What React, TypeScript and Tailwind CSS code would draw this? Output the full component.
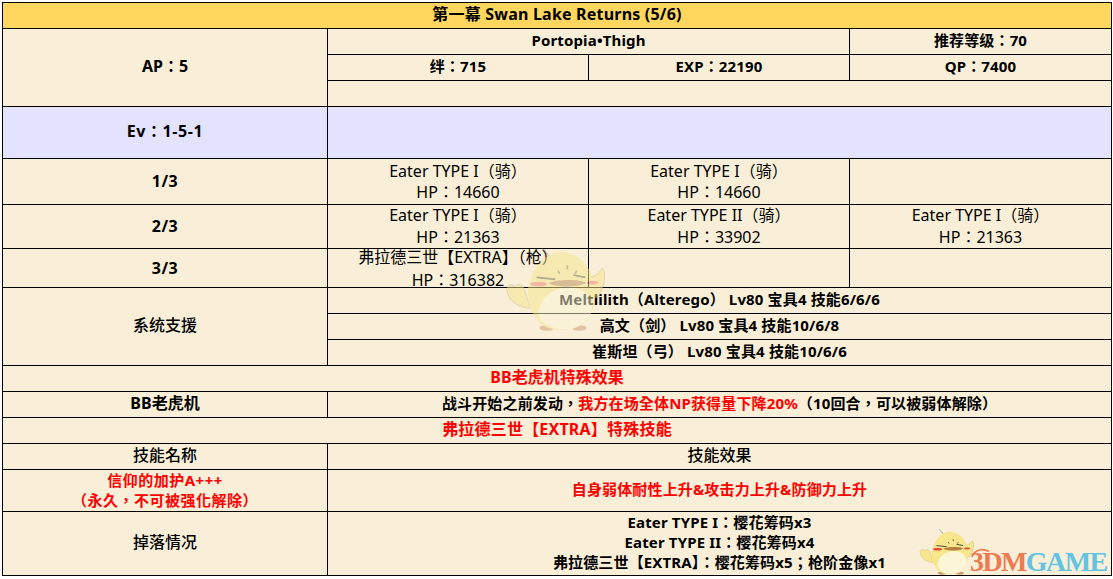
import React from "react";

const fontStack = { fontFamily: '"Noto Sans", "Noto Sans CJK TC", sans-serif' };

function Chick({ className, line, beak, cheek }: { className: string; line: string; beak: string; cheek: string }) {
  return (
    <svg viewBox="0 0 390 300" className={className}>
      <path d="M155 25 C165 32 172 40 180 52" fill="none" stroke={line} strokeWidth="4" opacity="0.6" />
      <path d="M50 145 C58 132 68 130 74 142 C82 130 98 132 102 146 L122 205 C100 205 70 190 62 178 C56 168 50 156 50 145Z" fill="#f7e68c" stroke="#cdbb8a" strokeWidth="3" />
      <path d="M305 112 C320 105 332 95 338 84 C348 105 345 140 322 172 L300 170Z" fill="#f7e68c" stroke="#cdbb8a" strokeWidth="3" />
      <ellipse cx="170" cy="264" rx="22" ry="8" fill="#c99a6b" />
      <ellipse cx="268" cy="264" rx="22" ry="8" fill="#c99a6b" />
      <path d="M210 36 C165 38 128 85 115 140 C106 190 130 240 170 262 C205 274 255 272 285 245 C315 215 322 160 305 105 C290 65 255 36 210 36Z" fill="#f7e68c" />
      <path d="M145 220 C150 170 195 140 240 142 C285 145 312 175 305 210 C295 245 265 268 225 268 C185 268 150 250 145 220Z" fill="#fcf6d6" />
      <path d="M176 130 C195 118 265 116 288 128 C270 142 200 144 176 130Z" fill={beak} />
      <path d="M140 112 L196 118 M250 105 L286 112" stroke={line} strokeWidth="5" />
      <path d="M232 76 V88 M204 92 L209 101 M260 92 L255 101" stroke={line} strokeWidth="5" opacity="0.7" />
      <ellipse cx="146" cy="132" rx="25" ry="7" fill={cheek} />
      <ellipse cx="308" cy="128" rx="17" ry="6" fill={cheek} />
    </svg>
  );
}

const cell = "border border-black text-center align-middle p-0 leading-[22px] pb-[3px]";
const cellLow = "border border-black text-center align-middle p-0 leading-[22px] pb-[1px]";
const two = "border border-black text-center align-middle p-0 text-[16px]";
const b15 = "font-bold text-[15px] tracking-[0.15px]";
const red = "text-[#ff0000]";

function Row({ h, children }: { h: number; children: React.ReactNode }) {
  return <tr style={{ height: h }}>{children}</tr>;
}

function Lines({ cls, a, b }: { cls: string; a: string; b: string }) {
  return (
    <div className={`flex flex-col items-center justify-center whitespace-nowrap ${cls}`}>
      <div>{a}</div>
      <div>{b}</div>
    </div>
  );
}

export default function App() {
  const r1 = "h-[44px] leading-[21px]";
  const r2 = "h-[43px] leading-[22px] pb-[2px]";
  const r3 = "h-[38px] leading-[23px] pt-[2px]";
  return (
    <div className="relative h-[579px] w-[1113px] overflow-hidden bg-white text-[16px] text-black" style={fontStack}>
      <div className="p-[2px]">
        <table className="w-[1109px] table-fixed border-collapse bg-[#f9efd8]">
          <colgroup>
            <col className="w-[325px]" />
            <col className="w-[261px]" />
            <col className="w-[261px]" />
            <col className="w-[262px]" />
          </colgroup>
          <tbody>
            <Row h={26}>
              <td colSpan={4} className={`${cell} bg-[#ffd75f] font-bold tracking-[0.2px]`}>第一幕 Swan Lake Returns (5/6)</td>
            </Row>
            <Row h={26}>
              <td rowSpan={3} className={`${cell} font-bold`}>AP：5</td>
              <td colSpan={2} className={`${cell} ${b15}`}>Portopia•Thigh</td>
              <td className={`${cell} ${b15}`}>推荐等级：70</td>
            </Row>
            <Row h={26}>
              <td className={`${cell} ${b15}`}>绊：715</td>
              <td className={`${cell} ${b15}`}>EXP：22190</td>
              <td className={`${cell} ${b15}`}>QP：7400</td>
            </Row>
            <Row h={26}>
              <td colSpan={3} className={cell}></td>
            </Row>
            <Row h={52}>
              <td className={`${cell} bg-[#e3e3ff] font-bold tracking-[0.6px]`}>Ev：1-5-1</td>
              <td colSpan={3} className={`${cell} bg-[#e3e3ff]`}></td>
            </Row>
            <Row h={46}>
              <td className={`${cellLow} font-bold tracking-[0.6px]`}>1/3</td>
              <td className={two}><Lines cls={r1} a="Eater TYPE I（骑）" b="HP：14660" /></td>
              <td className={two}><Lines cls={r1} a="Eater TYPE I（骑）" b="HP：14660" /></td>
              <td className={two}></td>
            </Row>
            <Row h={44}>
              <td className={`${cellLow} font-bold tracking-[0.6px]`}>2/3</td>
              <td className={two}><Lines cls={r2} a="Eater TYPE I（骑）" b="HP：21363" /></td>
              <td className={two}><Lines cls={r2} a="Eater TYPE II（骑）" b="HP：33902" /></td>
              <td className={two}><Lines cls={r2} a="Eater TYPE I（骑）" b="HP：21363" /></td>
            </Row>
            <Row h={39}>
              <td className={`${cellLow} font-bold tracking-[0.6px]`}>3/3</td>
              <td className={two}><Lines cls={r3} a="弗拉德三世【EXTRA】（枪）" b="HP：316382" /></td>
              <td className={two}></td>
              <td className={two}></td>
            </Row>
            <Row h={26}>
              <td rowSpan={3} className={`${cell} font-medium`}>系统支援</td>
              <td colSpan={3} className={`${cell} ${b15}`}>Meltlilith（Alterego） Lv80 宝具4 技能6/6/6</td>
            </Row>
            <Row h={26}>
              <td colSpan={3} className={`${cell} ${b15}`}>高文（剑） Lv80 宝具4 技能10/6/8</td>
            </Row>
            <Row h={26}>
              <td colSpan={3} className={`${cell} ${b15}`}>崔斯坦（弓） Lv80 宝具4 技能10/6/6</td>
            </Row>
            <Row h={26}>
              <td colSpan={4} className={`${cell} font-bold ${red}`}>BB老虎机特殊效果</td>
            </Row>
            <Row h={26}>
              <td className={`${cell} font-bold`}>BB老虎机</td>
              <td colSpan={3} className={`${cell} ${b15}`}>
                战斗开始之前发动，<span className={red}>我方在场全体NP获得量下降20%</span>（10回合，可以被弱体解除）
              </td>
            </Row>
            <Row h={26}>
              <td colSpan={4} className={`${cell} font-bold tracking-[0.2px] ${red}`}>弗拉德三世【EXTRA】特殊技能</td>
            </Row>
            <Row h={26}>
              <td className={`${cell} font-medium`}>技能名称</td>
              <td colSpan={3} className={`${cell} font-medium`}>技能效果</td>
            </Row>
            <Row h={42}>
              <td className={`border border-black p-0 text-center align-middle text-[15px] leading-[20px] font-bold tracking-[0.5px] ${red}`}>
                <Lines cls="h-[40px] pb-[1px]" a="信仰的加护A+++" b="（永久，不可被强化解除）" />
              </td>
              <td colSpan={3} className={`${cell} ${b15} ${red}`}>自身弱体耐性上升&amp;攻击力上升&amp;防御力上升</td>
            </Row>
            <Row h={64}>
              <td className={`${cell} font-medium`}>掉落情况</td>
              <td colSpan={3} className={`border border-black p-0 pb-[3px] text-center align-middle leading-[20px] ${b15}`}>
                Eater TYPE I：樱花筹码x3<br />Eater TYPE II：樱花筹码x4<br />弗拉德三世【EXTRA】：樱花筹码x5；枪阶金像x1
              </td>
            </Row>
          </tbody>
        </table>
      </div>
      <Chick className="absolute left-[490px] top-[240px] h-[100px] w-[130px] opacity-50" line="#6b6350" beak="#b98a56" cheek="#ee7f76" />
      <Chick className="absolute left-[911px] top-[525px] h-[55px] w-[71px]" line="#3d3a30" beak="#b5803f" cheek="#e8453c" />
      <svg viewBox="0 0 24 10" className="absolute left-[970px] top-[547px] h-[9px] w-[22px]">
        <path d="M3 9 C6 3 14 1 21 5" fill="none" stroke="#ee7a50" strokeWidth="1.8" />
      </svg>
      <div className="absolute left-[970px] top-[547px] text-[28px] leading-[30px] font-bold tracking-[-1.6px]" style={{ fontFamily: '"Liberation Serif", serif' }}>
        <span className="text-[#ee7a50]">3DM</span><span className="text-[#62c3e2]">GAME</span>
      </div>
    </div>
  );
}
